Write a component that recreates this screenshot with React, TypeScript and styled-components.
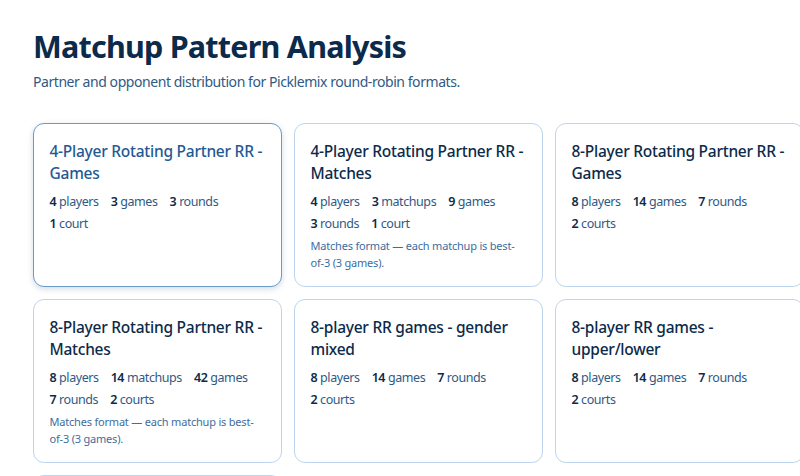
import React, { FC } from 'react';
import styled, { createGlobalStyle } from 'styled-components';

type Stat = { value: number; label: string };

type Pattern = {
	title: string;
	stats: Stat[];
	note?: string;
	active?: boolean;
};

const MATCHES_NOTE = 'Matches format — each matchup is best-of-3 (3 games).';

const PATTERNS: Pattern[] = [
	{
		title: '4-Player Rotating Partner RR - Games',
		active: true,
		stats: [
			{ value: 4, label: 'players' },
			{ value: 3, label: 'games' },
			{ value: 3, label: 'rounds' },
			{ value: 1, label: 'court' },
		],
	},
	{
		title: '4-Player Rotating Partner RR - Matches',
		note: MATCHES_NOTE,
		stats: [
			{ value: 4, label: 'players' },
			{ value: 3, label: 'matchups' },
			{ value: 9, label: 'games' },
			{ value: 3, label: 'rounds' },
			{ value: 1, label: 'court' },
		],
	},
	{
		title: '8-Player Rotating Partner RR - Games',
		stats: [
			{ value: 8, label: 'players' },
			{ value: 14, label: 'games' },
			{ value: 7, label: 'rounds' },
			{ value: 2, label: 'courts' },
		],
	},
	{
		title: '8-Player Rotating Partner RR - Matches',
		note: MATCHES_NOTE,
		stats: [
			{ value: 8, label: 'players' },
			{ value: 14, label: 'matchups' },
			{ value: 42, label: 'games' },
			{ value: 7, label: 'rounds' },
			{ value: 2, label: 'courts' },
		],
	},
	{
		title: '8-player RR games - gender mixed',
		stats: [
			{ value: 8, label: 'players' },
			{ value: 14, label: 'games' },
			{ value: 7, label: 'rounds' },
			{ value: 2, label: 'courts' },
		],
	},
	{
		title: '8-player RR games - upper/lower',
		stats: [
			{ value: 8, label: 'players' },
			{ value: 14, label: 'games' },
			{ value: 7, label: 'rounds' },
			{ value: 2, label: 'courts' },
		],
	},
	{ title: '', stats: [] },
];

const App: FC = () => (
	<>
		<GlobalStyle />
		<Page>
			<Title>Matchup Pattern Analysis</Title>
			<Subtitle>Partner and opponent distribution for Picklemix round-robin formats.</Subtitle>
			<Grid>
				{PATTERNS.map((pattern, index) => (
					<Card key={index} $active={pattern.active}>
						<CardTitle $active={pattern.active}>{pattern.title}</CardTitle>
						<Stats>
							{pattern.stats.map((stat) => (
								<StatItem key={stat.label}>
									<StatValue>{stat.value}</StatValue> {stat.label}
								</StatItem>
							))}
						</Stats>
						{pattern.note && <Note>{pattern.note}</Note>}
					</Card>
				))}
			</Grid>
		</Page>
	</>
);

const GlobalStyle = createGlobalStyle`
	html,
	body {
		margin: 0;
		height: 476px;
		overflow: hidden;
		background: #ffffff;
	}
`;

const Page = styled.div`
	width: 800px;
	height: 476px;
	overflow: hidden;
	padding: 25px 0 0 33px;
	box-sizing: border-box;
	font-family: 'Noto Sans', 'Open Sans', sans-serif;
`;

const Title = styled.h1`
	margin: 0;
	font-size: 30.5px;
	line-height: 42px;
	font-weight: 700;
	letter-spacing: -0.77px;
	color: #0c2a4a;
`;

const Subtitle = styled.p`
	margin: 4px 0 0;
	font-size: 14px;
	line-height: 22px;
	letter-spacing: -0.44px;
	color: #2f5a85;
`;

const Grid = styled.div`
	display: grid;
	grid-template-columns: repeat(3, 248.5px);
	grid-auto-rows: 164px;
	gap: 12px 12.5px;
	margin-top: 30px;
`;

const Card = styled.div<{ $active?: boolean }>`
	box-sizing: border-box;
	padding: 16px 15.5px;
	border-radius: 11px;
	border: 1px solid ${(props) => (props.$active ? '#6a9bcb' : '#bdd5ee')};
	box-shadow: ${(props) => (props.$active ? '0 2px 6px rgba(30, 80, 130, 0.2)' : 'none')};
	background: #ffffff;
`;

const CardTitle = styled.div<{ $active?: boolean }>`
	font-size: 15.5px;
	line-height: 22px;
	font-weight: 500;
	letter-spacing: -0.25px;
	color: ${(props) => (props.$active ? '#1f5a94' : '#0c2a4a')};
`;

const Stats = styled.div`
	display: flex;
	flex-wrap: wrap;
	gap: 0 12px;
	margin-top: 7px;
`;

const StatItem = styled.span`
	font-size: 12.5px;
	line-height: 22px;
	letter-spacing: -0.42px;
	color: #2f5a85;
`;

const StatValue = styled.span`
	font-weight: 600;
	color: #0c2a4a;
`;

const Note = styled.p`
	margin: 3px 0 0;
	font-size: 11px;
	line-height: 16.5px;
	letter-spacing: -0.2px;
	color: #3d6d9e;
`;

export default App;
